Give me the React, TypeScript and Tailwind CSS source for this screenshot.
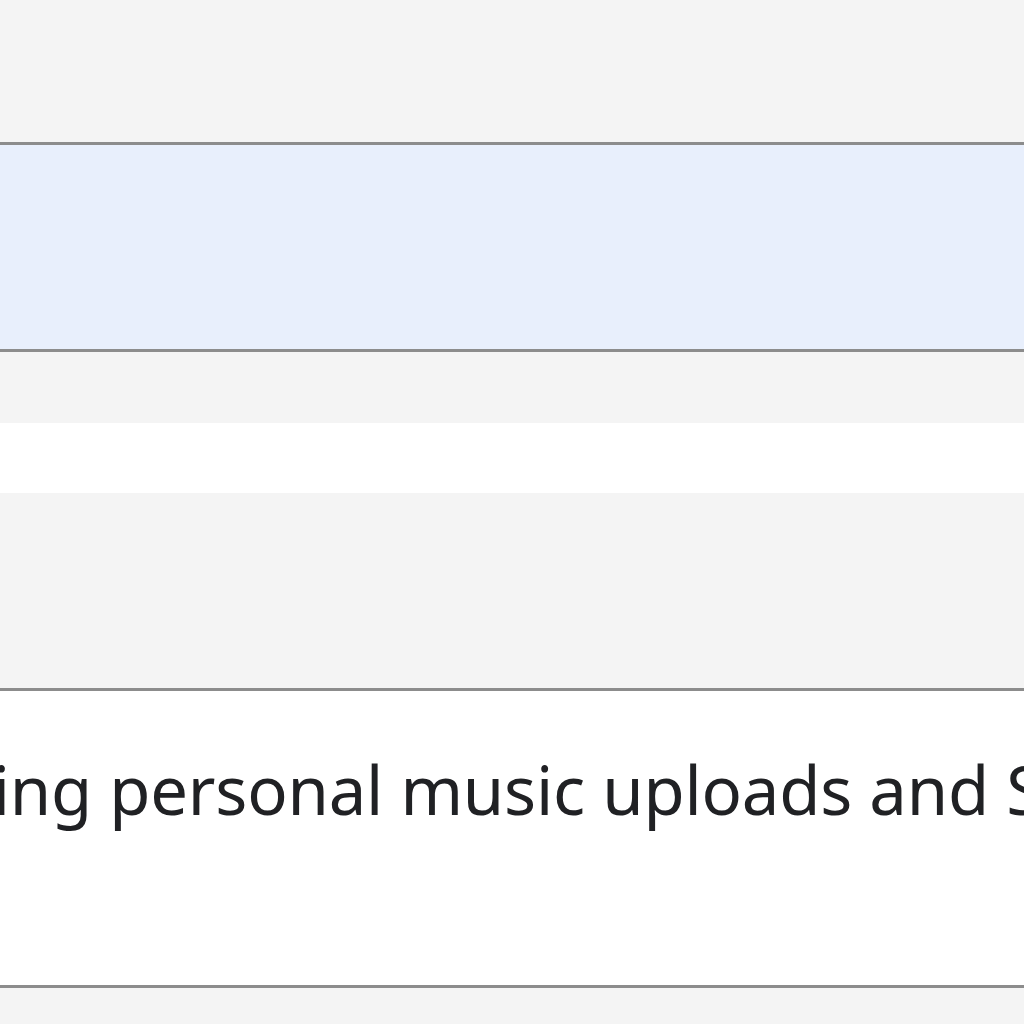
import React from 'react';

const App: React.FC = () => {
    return (
        <div className="w-[1024px] h-[1024px] overflow-hidden flex flex-col bg-[#f4f4f4]" style={{ fontFamily: '"Noto Sans", sans-serif' }}>
            {/* top band */}
            <div className="h-[142px] shrink-0 bg-[#f4f4f4]" />
            {/* selected row */}
            <div className="h-[210px] shrink-0 bg-[#e8effc] border-y-[3px] border-[#8c8c8c]" />
            <div className="h-[71px] shrink-0 bg-[#f4f4f4]" />
            <div className="h-[70px] shrink-0 bg-white" />
            <div className="h-[195px] shrink-0 bg-[#f4f4f4]" />
            {/* description row */}
            <div className="h-[300px] shrink-0 bg-white border-y-[3px] border-[#8c8c8c] flex items-start overflow-hidden">
                <p className="mt-[48px] -ml-[88px] whitespace-nowrap text-[67px] leading-[100px] tracking-[-0.2px] text-[#202124]">
                    Using personal music uploads and Spotify
                </p>
            </div>
            <div className="flex-1 bg-[#f4f4f4]" />
        </div>
    );
};

export default App;
